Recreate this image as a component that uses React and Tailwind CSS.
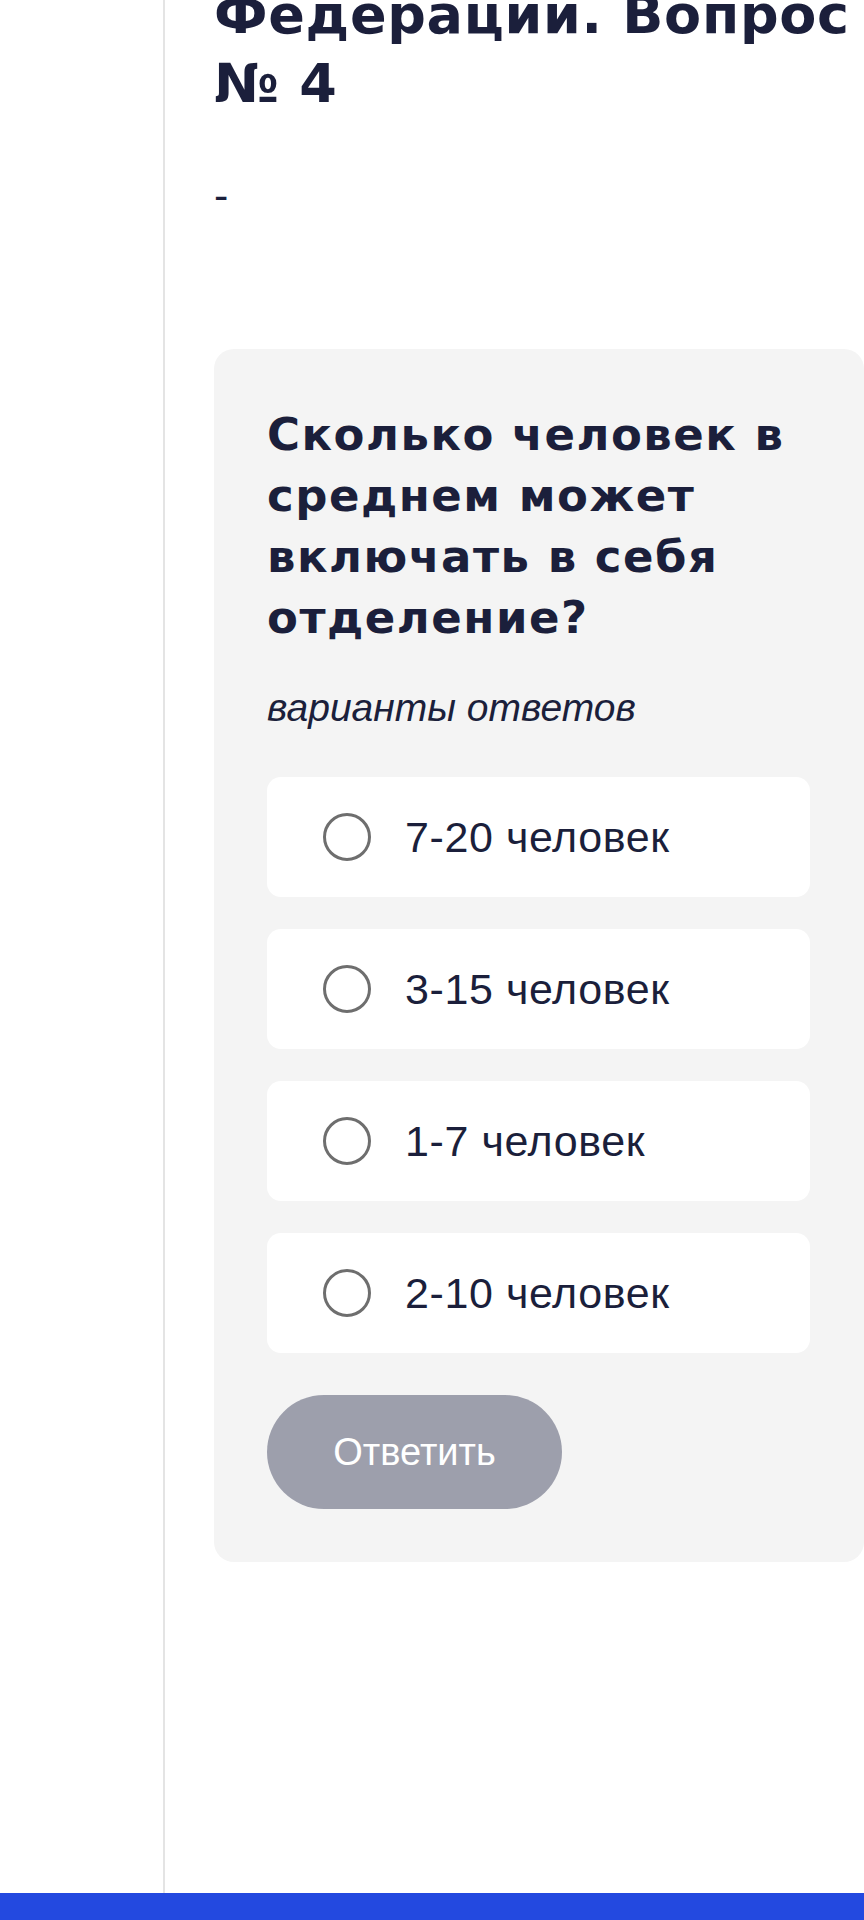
import React from "react";

const options = ["7-20 человек", "3-15 человек", "1-7 человек", "2-10 человек"];

const AnswerOption = ({ label }) => {
  return (
    <label className="flex h-[120px] cursor-pointer items-center rounded-[14px] bg-white pl-[56px]">
      <span className="h-[48px] w-[48px] shrink-0 rounded-full border-[3px] border-[#6e6e6e]" />
      <span className="ml-[34px] text-[43px] leading-[56px] tracking-[0.6px] text-[#1b1f3b]">{label}</span>
    </label>
  );
};

const App = () => {
  return (
    <div
      className="flex h-[1920px] w-[864px] flex-col overflow-hidden bg-white"
      style={{ fontFamily: '"Liberation Sans", Arial, sans-serif' }}
    >
      <div className="flex flex-1">
        <aside className="w-[165px] shrink-0 border-r-2 border-[#e4e4e4]" />
        <main className="flex-1 pl-[49px]">
          <h1 className="mt-[-20px] font-['DejaVu_Sans',sans-serif] text-[54px] font-bold leading-[69px] tracking-[0.7px] text-[#1b1f3b]">
            Федерации. Вопрос № 4
          </h1>
          <p className="mt-[49px] text-[43px] leading-[56px] text-[#1b1f3b]">-</p>

          <section className="mt-[126px] rounded-[20px] bg-[#f4f4f4] pt-[55px] pr-[54px] pb-[53px] pl-[53px]">
            <h2 className="font-['DejaVu_Sans',sans-serif] text-[45px] font-bold leading-[61px] tracking-[1.5px] text-[#1b1f3b]">
              Сколько человек в среднем может включать в себя отделение?
            </h2>
            <p className="mt-[32px] text-[39px] italic leading-[56px] text-[#1b1f3b]">варианты ответов</p>

            <div className="mt-[41px] flex flex-col gap-[32px]">
              {options.map((o) => (
                <AnswerOption key={o} label={o} />
              ))}
            </div>

            <button className="mt-[42px] flex h-[114px] w-[295px] items-center justify-center rounded-full bg-[#9d9fac] text-[38px] text-white">
              Ответить
            </button>
          </section>
        </main>
      </div>
      <div className="h-[27px] shrink-0 bg-[#2349e0]" />
    </div>
  );
};

export default App;
